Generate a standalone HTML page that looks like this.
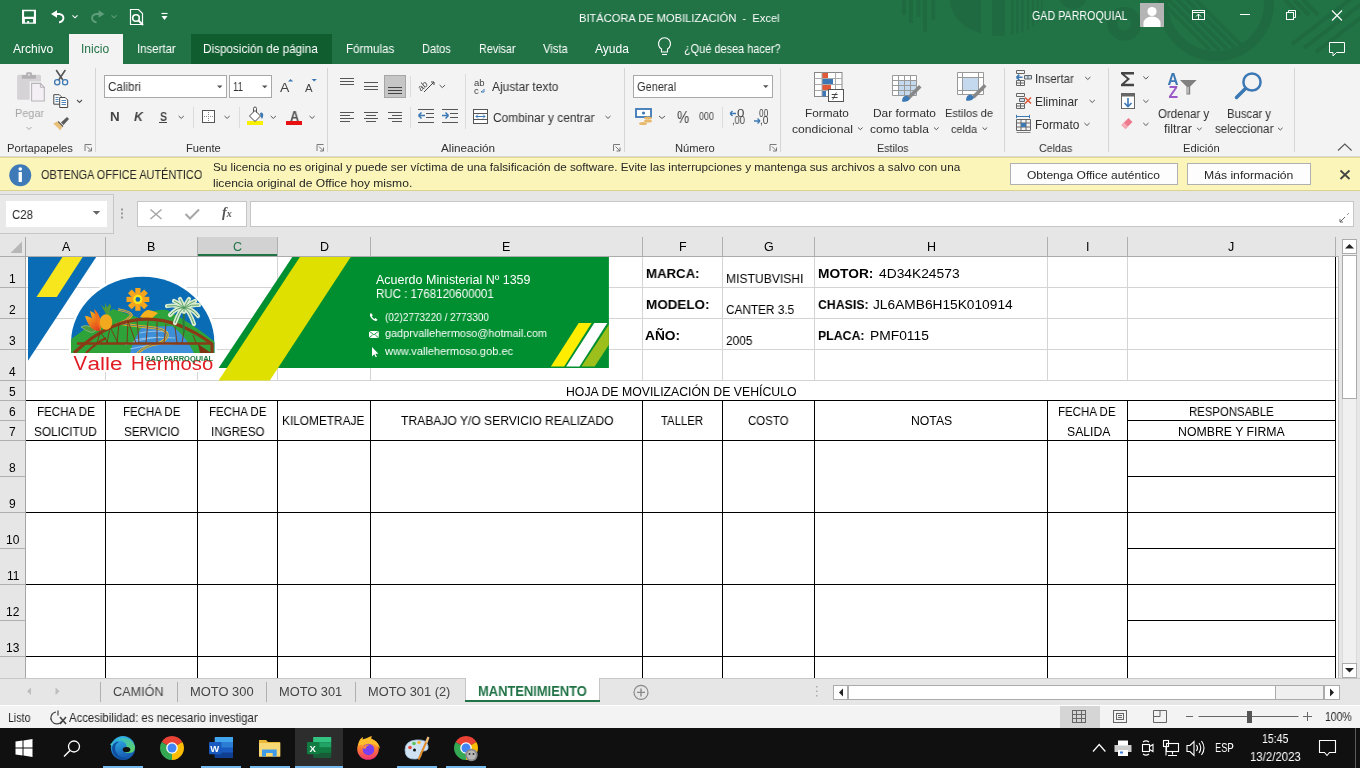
<!DOCTYPE html><html><head><meta charset="utf-8"><style>
*{margin:0;padding:0;box-sizing:border-box}
html,body{width:1360px;height:768px;overflow:hidden;background:#fff;font-family:"Liberation Sans",sans-serif}
.t{position:absolute;white-space:pre;line-height:1;will-change:transform}
svg{position:absolute;overflow:visible}
</style></head><body>
<div style="position:absolute;left:0px;top:0px;width:1360px;height:64px;background:#217346"></div>
<div style="position:absolute;left:0px;top:64px;width:1360px;height:93px;background:#f3f3f3"></div>
<div style="position:absolute;left:69px;top:34px;width:54px;height:30px;background:#f3f3f3"></div>
<div style="position:absolute;left:191px;top:34px;width:141px;height:30px;background:#105d30"></div>
<div style="position:absolute;left:0px;top:157px;width:1360px;height:34px;background:#fbf5b9;border-top:1px solid #e2d98e;border-bottom:1px solid #dcd38c"></div>
<div style="position:absolute;left:0px;top:156px;width:1360px;height:1px;background:#d6d6d6"></div>
<div style="position:absolute;left:0px;top:191px;width:1360px;height:46px;background:#e6e6e6"></div>
<div style="position:absolute;left:0px;top:237px;width:1360px;height:19px;background:#e6e6e6"></div>
<div style="position:absolute;left:26px;top:256px;width:1312px;height:422px;background:#fff"></div>
<div style="position:absolute;left:0px;top:256px;width:25px;height:422px;background:#e6e6e6"></div>
<div style="position:absolute;left:1338px;top:237px;width:22px;height:441px;background:#e6e6e6"></div>
<div style="position:absolute;left:0px;top:678px;width:1360px;height:27px;background:#e6e6e6"></div>
<div style="position:absolute;left:0px;top:706px;width:1360px;height:22px;background:#f3f3f3"></div>
<div style="position:absolute;left:0px;top:728px;width:1360px;height:40px;background:#101010"></div>
<svg width="1360" height="64" style="left:0;top:0"><g fill="#1f6a40"><rect x="902" y="0" width="3.8" height="15"/><rect x="909" y="0" width="3.8" height="23"/><rect x="916.5" y="0" width="3.8" height="17"/><rect x="923" y="0" width="3.8" height="31.5"/><rect x="931.4" y="0" width="3.8" height="20"/></g><clipPath id="semi"><path d="M950 0 A49.5 36 0 0 0 1049 0 Z"/></clipPath><g clip-path="url(#semi)" fill="#1f6a40"><rect x="950" y="0" width="31" height="40"/><rect x="992" y="0" width="13" height="40"/><rect x="1011" y="0" width="2.5" height="40"/><rect x="1016" y="0" width="2.5" height="40"/><rect x="1021" y="0" width="2.5" height="40"/><rect x="1027" y="0" width="2" height="40"/><rect x="1032" y="0" width="2" height="40"/><rect x="1037" y="0" width="1.5" height="40"/><rect x="1041" y="0" width="1.5" height="40"/></g><circle cx="1073" cy="-5" r="14" fill="#1f6a40"/><circle cx="1124.3" cy="23.7" r="12" fill="none" stroke="#1f6a40" stroke-width="10"/><circle cx="1216" cy="3" r="53" fill="none" stroke="#1f6a40" stroke-width="10"/><clipPath id="bigr"><circle cx="1216" cy="3" r="48"/></clipPath><g clip-path="url(#bigr)" stroke="#1f6a40" stroke-width="3.5"><line x1="1150" y1="-10" x2="1210" y2="50"/><line x1="1159" y1="-10" x2="1219" y2="50"/><line x1="1168" y1="-10" x2="1228" y2="50"/><line x1="1177" y1="-10" x2="1237" y2="50"/><line x1="1186" y1="-10" x2="1246" y2="50"/></g><g stroke="#1f6a40" stroke-width="4"><line x1="1285" y1="0" x2="1300" y2="15"/><line x1="1294" y1="0" x2="1309" y2="15"/><line x1="1303" y1="0" x2="1318" y2="15"/><line x1="1360" y1="-8" x2="1292" y2="44"/><line x1="1372" y1="-4" x2="1304" y2="48"/><line x1="1384" y1="0" x2="1316" y2="52"/></g></svg>
<div style="position:absolute;left:26px;top:287px;width:1312px;height:1px;background:#d4d4d4"></div>
<div style="position:absolute;left:26px;top:318px;width:1312px;height:1px;background:#d4d4d4"></div>
<div style="position:absolute;left:26px;top:349px;width:1312px;height:1px;background:#d4d4d4"></div>
<div style="position:absolute;left:26px;top:380px;width:1312px;height:1px;background:#d4d4d4"></div>
<div style="position:absolute;left:105px;top:256px;width:1px;height:124px;background:#d4d4d4"></div>
<div style="position:absolute;left:197px;top:256px;width:1px;height:124px;background:#d4d4d4"></div>
<div style="position:absolute;left:277px;top:256px;width:1px;height:124px;background:#d4d4d4"></div>
<div style="position:absolute;left:370px;top:256px;width:1px;height:124px;background:#d4d4d4"></div>
<div style="position:absolute;left:642px;top:256px;width:1px;height:124px;background:#d4d4d4"></div>
<div style="position:absolute;left:722px;top:256px;width:1px;height:124px;background:#d4d4d4"></div>
<div style="position:absolute;left:814px;top:256px;width:1px;height:124px;background:#d4d4d4"></div>
<div style="position:absolute;left:1047px;top:256px;width:1px;height:124px;background:#d4d4d4"></div>
<div style="position:absolute;left:1127px;top:256px;width:1px;height:124px;background:#d4d4d4"></div>
<div style="position:absolute;left:1335px;top:256px;width:1px;height:124px;background:#d4d4d4"></div>
<div style="position:absolute;left:1338px;top:256px;width:1px;height:422px;background:#b8b8b8"></div>
<div style="position:absolute;left:26px;top:400px;width:1310px;height:1px;background:#000"></div>
<div style="position:absolute;left:26px;top:440px;width:1310px;height:1px;background:#000"></div>
<div style="position:absolute;left:26px;top:512px;width:1310px;height:1px;background:#000"></div>
<div style="position:absolute;left:26px;top:584px;width:1310px;height:1px;background:#000"></div>
<div style="position:absolute;left:26px;top:656px;width:1310px;height:1px;background:#000"></div>
<div style="position:absolute;left:1127px;top:420px;width:209px;height:1px;background:#000"></div>
<div style="position:absolute;left:1127px;top:476px;width:209px;height:1px;background:#000"></div>
<div style="position:absolute;left:1127px;top:548px;width:209px;height:1px;background:#000"></div>
<div style="position:absolute;left:1127px;top:620px;width:209px;height:1px;background:#000"></div>
<div style="position:absolute;left:105px;top:400px;width:1px;height:278px;background:#000"></div>
<div style="position:absolute;left:197px;top:400px;width:1px;height:278px;background:#000"></div>
<div style="position:absolute;left:277px;top:400px;width:1px;height:278px;background:#000"></div>
<div style="position:absolute;left:370px;top:400px;width:1px;height:278px;background:#000"></div>
<div style="position:absolute;left:642px;top:400px;width:1px;height:278px;background:#000"></div>
<div style="position:absolute;left:722px;top:400px;width:1px;height:278px;background:#000"></div>
<div style="position:absolute;left:814px;top:400px;width:1px;height:278px;background:#000"></div>
<div style="position:absolute;left:1047px;top:400px;width:1px;height:278px;background:#000"></div>
<div style="position:absolute;left:1127px;top:400px;width:1px;height:278px;background:#000"></div>
<div style="position:absolute;left:1335px;top:400px;width:1px;height:278px;background:#000"></div>
<div style="position:absolute;left:1335px;top:256px;width:1px;height:422px;background:#000"></div>
<div style="position:absolute;left:197px;top:237px;width:80px;height:19px;background:#d2d2d2"></div>
<div style="position:absolute;left:197px;top:254px;width:80px;height:2px;background:#217346"></div>
<div style="position:absolute;left:0px;top:256px;width:1338px;height:1px;background:#ababab"></div>
<div style="position:absolute;left:105px;top:237px;width:1px;height:19px;background:#b0b0b0"></div>
<div style="position:absolute;left:197px;top:237px;width:1px;height:19px;background:#b0b0b0"></div>
<div style="position:absolute;left:277px;top:237px;width:1px;height:19px;background:#b0b0b0"></div>
<div style="position:absolute;left:370px;top:237px;width:1px;height:19px;background:#b0b0b0"></div>
<div style="position:absolute;left:642px;top:237px;width:1px;height:19px;background:#b0b0b0"></div>
<div style="position:absolute;left:722px;top:237px;width:1px;height:19px;background:#b0b0b0"></div>
<div style="position:absolute;left:814px;top:237px;width:1px;height:19px;background:#b0b0b0"></div>
<div style="position:absolute;left:1047px;top:237px;width:1px;height:19px;background:#b0b0b0"></div>
<div style="position:absolute;left:1127px;top:237px;width:1px;height:19px;background:#b0b0b0"></div>
<div style="position:absolute;left:1335px;top:237px;width:1px;height:19px;background:#b0b0b0"></div>
<div style="position:absolute;left:25px;top:237px;width:1px;height:441px;background:#a6a6a6"></div>
<div style="position:absolute;left:0px;top:287px;width:25px;height:1px;background:#b0b0b0"></div>
<div style="position:absolute;left:0px;top:318px;width:25px;height:1px;background:#b0b0b0"></div>
<div style="position:absolute;left:0px;top:349px;width:25px;height:1px;background:#b0b0b0"></div>
<div style="position:absolute;left:0px;top:380px;width:25px;height:1px;background:#b0b0b0"></div>
<div style="position:absolute;left:0px;top:400px;width:25px;height:1px;background:#b0b0b0"></div>
<div style="position:absolute;left:0px;top:420px;width:25px;height:1px;background:#b0b0b0"></div>
<div style="position:absolute;left:0px;top:440px;width:25px;height:1px;background:#b0b0b0"></div>
<div style="position:absolute;left:0px;top:476px;width:25px;height:1px;background:#b0b0b0"></div>
<div style="position:absolute;left:0px;top:512px;width:25px;height:1px;background:#b0b0b0"></div>
<div style="position:absolute;left:0px;top:548px;width:25px;height:1px;background:#b0b0b0"></div>
<div style="position:absolute;left:0px;top:584px;width:25px;height:1px;background:#b0b0b0"></div>
<div style="position:absolute;left:0px;top:620px;width:25px;height:1px;background:#b0b0b0"></div>
<div style="position:absolute;left:0px;top:656px;width:25px;height:1px;background:#b0b0b0"></div>
<div class="t" style="left:578.50px;top:13.00px;font-size:11.48px;color:#fff;transform:scaleX(0.9683);transform-origin:0 0;">BITÁCORA DE MOBILIZACIÓN  -  Excel</div>
<div class="t" style="left:1031.75px;top:10.00px;font-size:12.06px;color:#fff;transform:scaleX(0.8888);transform-origin:0 0;">GAD PARROQUIAL</div>
<div class="t" style="left:13.00px;top:43.00px;font-size:12.06px;color:#fff;transform:scaleX(1.0004);transform-origin:0 0;">Archivo</div>
<div class="t" style="left:81.25px;top:43.00px;font-size:12.06px;color:#217346;transform:scaleX(0.9940);transform-origin:0 0;">Inicio</div>
<div class="t" style="left:137.00px;top:43.00px;font-size:12.06px;color:#fff;transform:scaleX(0.9475);transform-origin:0 0;">Insertar</div>
<div class="t" style="left:203.25px;top:43.00px;font-size:12.06px;color:#fff;transform:scaleX(0.9737);transform-origin:0 0;">Disposición de página</div>
<div class="t" style="left:346.20px;top:43.00px;font-size:12.06px;color:#fff;transform:scaleX(0.9621);transform-origin:0 0;">Fórmulas</div>
<div class="t" style="left:422.30px;top:43.00px;font-size:12.06px;color:#fff;transform:scaleX(0.9115);transform-origin:0 0;">Datos</div>
<div class="t" style="left:479.30px;top:43.00px;font-size:12.06px;color:#fff;transform:scaleX(0.8949);transform-origin:0 0;">Revisar</div>
<div class="t" style="left:542.50px;top:43.00px;font-size:12.06px;color:#fff;transform:scaleX(0.9339);transform-origin:0 0;">Vista</div>
<div class="t" style="left:595.00px;top:43.00px;font-size:12.06px;color:#fff;transform:scaleX(0.9965);transform-origin:0 0;">Ayuda</div>
<div class="t" style="left:684.20px;top:43.00px;font-size:12.06px;color:#fff;transform:scaleX(0.9077);transform-origin:0 0;">¿Qué desea hacer?</div>
<div style="position:absolute;left:95px;top:68px;width:1px;height:84px;background:#d5d5d5"></div>
<div style="position:absolute;left:327px;top:68px;width:1px;height:84px;background:#d5d5d5"></div>
<div style="position:absolute;left:624px;top:68px;width:1px;height:84px;background:#d5d5d5"></div>
<div style="position:absolute;left:780px;top:68px;width:1px;height:84px;background:#d5d5d5"></div>
<div style="position:absolute;left:1004px;top:68px;width:1px;height:84px;background:#d5d5d5"></div>
<div style="position:absolute;left:1108px;top:68px;width:1px;height:84px;background:#d5d5d5"></div>
<div style="position:absolute;left:1294px;top:68px;width:1px;height:84px;background:#d5d5d5"></div>
<div style="position:absolute;left:193px;top:107px;width:1px;height:21px;background:#dcdcdc"></div>
<div style="position:absolute;left:239px;top:107px;width:1px;height:21px;background:#dcdcdc"></div>
<div style="position:absolute;left:410px;top:76px;width:1px;height:21px;background:#dcdcdc"></div>
<div style="position:absolute;left:410px;top:107px;width:1px;height:21px;background:#dcdcdc"></div>
<div style="position:absolute;left:465px;top:74px;width:1px;height:55px;background:#dcdcdc"></div>
<div style="position:absolute;left:722px;top:107px;width:1px;height:21px;background:#dcdcdc"></div>
<div class="t" style="left:6.70px;top:143.00px;font-size:11.19px;color:#303030;transform:scaleX(0.9928);transform-origin:0 0;">Portapapeles</div>
<div class="t" style="left:185.60px;top:143.00px;font-size:11.19px;color:#303030;transform:scaleX(0.9982);transform-origin:0 0;">Fuente</div>
<div class="t" style="left:440.70px;top:143.00px;font-size:11.19px;color:#303030;transform:scaleX(1.0474);transform-origin:0 0;">Alineación</div>
<div class="t" style="left:674.50px;top:143.00px;font-size:11.19px;color:#303030;transform:scaleX(0.9978);transform-origin:0 0;">Número</div>
<div class="t" style="left:876.70px;top:143.00px;font-size:11.19px;color:#303030;transform:scaleX(0.9557);transform-origin:0 0;">Estilos</div>
<div class="t" style="left:1039.30px;top:143.00px;font-size:11.19px;color:#303030;transform:scaleX(0.9552);transform-origin:0 0;">Celdas</div>
<div class="t" style="left:1182.50px;top:143.00px;font-size:11.19px;color:#303030;transform:scaleX(0.9997);transform-origin:0 0;">Edición</div>
<div class="t" style="left:14.70px;top:108.00px;font-size:11.48px;color:#a6a6a6;transform:scaleX(0.9492);transform-origin:0 0;">Pegar</div>
<div style="position:absolute;left:104px;top:75px;width:123px;height:23px;background:#fff;border:1px solid #a8a8a8"></div>
<div style="position:absolute;left:229px;top:75px;width:43px;height:23px;background:#fff;border:1px solid #a8a8a8"></div>
<div class="t" style="left:107.50px;top:82.00px;font-size:11.92px;color:#303030;transform:scaleX(0.9766);transform-origin:0 0;">Calibri</div>
<div class="t" style="left:232.80px;top:82.00px;font-size:11.92px;color:#303030;transform:scaleX(0.8068);transform-origin:0 0;">11</div>
<div class="t" style="left:280.40px;top:81.00px;font-size:13.66px;color:#444;transform:scaleX(1.0269);transform-origin:0 0;">A</div>
<div class="t" style="left:305.10px;top:84.00px;font-size:10.32px;color:#444;transform:scaleX(1.0992);transform-origin:0 0;">A</div>
<div class="t" style="left:110.00px;top:110.00px;font-size:13.37px;font-weight:bold;color:#444;transform:scaleX(0.9659);transform-origin:0 0;">N</div>
<div class="t" style="left:133.90px;top:110.00px;font-size:13.37px;font-weight:bold;color:#444;transform:scaleX(0.9244);transform-origin:0 0;font-style:italic;">K</div>
<div class="t" style="left:159.50px;top:110.00px;font-size:13.37px;font-weight:bold;color:#444;transform:scaleX(0.7984);transform-origin:0 0;">S</div>
<div style="position:absolute;left:159px;top:122px;width:8px;height:1px;background:#444"></div>
<div style="position:absolute;left:247px;top:121px;width:16px;height:4px;background:#f8f000"></div>
<div class="t" style="left:289.80px;top:110.00px;font-size:13.95px;font-weight:bold;color:#555;transform:scaleX(0.9058);transform-origin:0 0;">A</div>
<div style="position:absolute;left:286px;top:121px;width:16px;height:4px;background:#e81010"></div>
<div style="position:absolute;left:384px;top:75px;width:22px;height:23px;background:#c6c6c6;border:1px solid #a6a6a6"></div>
<div class="t" style="left:491.90px;top:81.00px;font-size:12.21px;color:#303030;transform:scaleX(0.9781);transform-origin:0 0;">Ajustar texto</div>
<div class="t" style="left:492.60px;top:112.00px;font-size:12.21px;color:#303030;transform:scaleX(0.9765);transform-origin:0 0;">Combinar y centrar</div>
<div style="position:absolute;left:633px;top:75px;width:140px;height:23px;background:#fff;border:1px solid #a8a8a8"></div>
<div class="t" style="left:636.50px;top:81.00px;font-size:12.50px;color:#303030;transform:scaleX(0.8787);transform-origin:0 0;">General</div>
<div class="t" style="left:677.20px;top:110.00px;font-size:15.99px;color:#444;transform:scaleX(0.8644);transform-origin:0 0;">%</div>
<div class="t" style="left:699.40px;top:112.00px;font-size:10.47px;color:#444;transform:scaleX(0.8468);transform-origin:0 0;">000</div>
<div class="t" style="left:737.00px;top:109.00px;font-size:10.17px;color:#444;transform:scaleX(1.3105);transform-origin:0 0;">0</div>
<div class="t" style="left:731.50px;top:116.00px;font-size:10.17px;color:#444;transform:scaleX(0.9121);transform-origin:0 0;">,00</div>
<div class="t" style="left:759.00px;top:109.00px;font-size:10.17px;color:#444;transform:scaleX(0.8146);transform-origin:0 0;">00</div>
<div class="t" style="left:760.00px;top:116.00px;font-size:10.17px;color:#444;transform:scaleX(0.9652);transform-origin:0 0;">,0</div>
<div class="t" style="left:805.40px;top:107.00px;font-size:11.63px;color:#303030;transform:scaleX(1.0135);transform-origin:0 0;">Formato</div>
<div class="t" style="left:791.80px;top:123.00px;font-size:11.63px;color:#303030;transform:scaleX(1.0464);transform-origin:0 0;">condicional</div>
<div class="t" style="left:873.40px;top:107.00px;font-size:11.63px;color:#303030;transform:scaleX(1.0261);transform-origin:0 0;">Dar formato</div>
<div class="t" style="left:869.60px;top:123.00px;font-size:11.63px;color:#303030;transform:scaleX(1.0348);transform-origin:0 0;">como tabla</div>
<div class="t" style="left:945.40px;top:107.00px;font-size:11.63px;color:#303030;transform:scaleX(0.9522);transform-origin:0 0;">Estilos de</div>
<div class="t" style="left:950.80px;top:123.00px;font-size:11.63px;color:#303030;transform:scaleX(0.9408);transform-origin:0 0;">celda</div>
<div class="t" style="left:1035.40px;top:74.00px;font-size:11.92px;color:#303030;transform:scaleX(0.9603);transform-origin:0 0;">Insertar</div>
<div class="t" style="left:1035.40px;top:97.00px;font-size:11.92px;color:#303030;transform:scaleX(0.9924);transform-origin:0 0;">Eliminar</div>
<div class="t" style="left:1035.40px;top:120.00px;font-size:11.92px;color:#303030;transform:scaleX(0.9911);transform-origin:0 0;">Formato</div>
<div class="t" style="left:1157.90px;top:108.00px;font-size:12.21px;color:#303030;transform:scaleX(0.9416);transform-origin:0 0;">Ordenar y</div>
<div class="t" style="left:1164.20px;top:123.00px;font-size:12.21px;color:#303030;transform:scaleX(1.0257);transform-origin:0 0;">filtrar</div>
<div class="t" style="left:1227.00px;top:108.00px;font-size:12.21px;color:#303030;transform:scaleX(0.9264);transform-origin:0 0;">Buscar y</div>
<div class="t" style="left:1214.70px;top:123.00px;font-size:12.21px;color:#303030;transform:scaleX(0.9453);transform-origin:0 0;">seleccionar</div>
<div class="t" style="left:40.50px;top:170.00px;font-size:11.92px;color:#262626;transform:scaleX(0.9168);transform-origin:0 0;">OBTENGA OFFICE AUTÉNTICO</div>
<div class="t" style="left:213.20px;top:161.00px;font-size:11.63px;color:#262626;transform:scaleX(1.0081);transform-origin:0 0;">Su licencia no es original y puede ser víctima de una falsificación de software. Evite las interrupciones y mantenga sus archivos a salvo con una</div>
<div class="t" style="left:213.20px;top:177.00px;font-size:11.63px;color:#262626;transform:scaleX(1.0394);transform-origin:0 0;">licencia original de Office hoy mismo.</div>
<div style="position:absolute;left:1010px;top:163px;width:168px;height:22px;background:#fdfdfd;border:1px solid #b0b0b0"></div>
<div style="position:absolute;left:1187px;top:163px;width:124px;height:22px;background:#fdfdfd;border:1px solid #b0b0b0"></div>
<div class="t" style="left:1026.50px;top:169.00px;font-size:11.63px;color:#262626;transform:scaleX(1.0356);transform-origin:0 0;">Obtenga Office auténtico</div>
<div class="t" style="left:1203.50px;top:169.00px;font-size:11.63px;color:#262626;transform:scaleX(1.0482);transform-origin:0 0;">Más información</div>
<div style="position:absolute;left:-1px;top:194px;width:115px;height:40px;border:1px solid #c6c6c6;background:#e9e9e9"></div>
<div style="position:absolute;left:6px;top:201px;width:101px;height:26px;background:#fff"></div>
<div class="t" style="left:12.40px;top:209.00px;font-size:12.50px;color:#262626;transform:scaleX(0.9155);transform-origin:0 0;">C28</div>
<div style="position:absolute;left:137px;top:201px;width:110px;height:26px;background:#fff;border:1px solid #c6c6c6"></div>
<div class="t" style="left:222px;top:205.5px;font-family:'Liberation Serif',serif;font-style:italic;font-weight:bold;font-size:14px;color:#555">f<span style="font-size:10px">x</span></div>
<div style="position:absolute;left:250px;top:201px;width:1104px;height:26px;background:#fff;border:1px solid #c6c6c6"></div>
<div style="position:absolute;left:1342px;top:239px;width:15px;height:15px;background:#fff;border:1px solid #ababab"></div>
<div style="position:absolute;left:1342px;top:254px;width:15px;height:410px;background:#f0f0f0;border-left:1px solid #dadada;border-right:1px solid #dadada"></div>
<div style="position:absolute;left:1342px;top:255px;width:15px;height:144px;background:#fff;border:1px solid #ababab"></div>
<div style="position:absolute;left:1342px;top:663px;width:15px;height:15px;background:#fff;border:1px solid #ababab"></div>
<div style="position:absolute;left:0px;top:678px;width:1360px;height:1px;background:#c6c6c6"></div>
<div style="position:absolute;left:100px;top:682px;width:1px;height:20px;background:#b0b0b0"></div>
<div style="position:absolute;left:177px;top:682px;width:1px;height:20px;background:#b0b0b0"></div>
<div style="position:absolute;left:266px;top:682px;width:1px;height:20px;background:#b0b0b0"></div>
<div style="position:absolute;left:355px;top:682px;width:1px;height:20px;background:#b0b0b0"></div>
<div class="t" style="left:113.25px;top:686.00px;font-size:12.79px;color:#444;transform:scaleX(0.9870);transform-origin:0 0;">CAMIÓN</div>
<div class="t" style="left:189.50px;top:686.00px;font-size:12.79px;color:#444;transform:scaleX(1.0110);transform-origin:0 0;">MOTO 300</div>
<div class="t" style="left:278.50px;top:686.00px;font-size:12.79px;color:#444;transform:scaleX(1.0038);transform-origin:0 0;">MOTO 301</div>
<div class="t" style="left:368.10px;top:686.00px;font-size:12.79px;color:#444;transform:scaleX(1.0019);transform-origin:0 0;">MOTO 301 (2)</div>
<div style="position:absolute;left:465px;top:678px;width:135px;height:24px;background:#fff;border-left:1px solid #c6c6c6;border-right:1px solid #c6c6c6"></div>
<div style="position:absolute;left:465px;top:700px;width:135px;height:2px;background:#217346"></div>
<div class="t" style="left:477.70px;top:685.00px;font-size:13.95px;font-weight:bold;color:#217346;transform:scaleX(0.9272);transform-origin:0 0;">MANTENIMIENTO</div>
<div style="position:absolute;left:833px;top:685px;width:491px;height:15px;background:#f0f0f0;border:1px solid #ababab"></div>
<div style="position:absolute;left:833px;top:685px;width:15px;height:15px;background:#fff;border:1px solid #ababab"></div>
<div style="position:absolute;left:848px;top:685px;width:428px;height:15px;background:#fff;border:1px solid #ababab"></div>
<div style="position:absolute;left:1324px;top:685px;width:16px;height:15px;background:#fff;border:1px solid #ababab"></div>
<div class="t" style="left:7.50px;top:713.00px;font-size:11.92px;color:#262626;transform:scaleX(0.8947);transform-origin:0 0;">Listo</div>
<div class="t" style="left:68.75px;top:713.00px;font-size:11.92px;color:#262626;transform:scaleX(0.9529);transform-origin:0 0;">Accesibilidad: es necesario investigar</div>
<div style="position:absolute;left:1060px;top:706px;width:40px;height:22px;background:#d5d5d5"></div>
<div class="t" style="left:1325.00px;top:712.00px;font-size:11.92px;color:#262626;transform:scaleX(0.8784);transform-origin:0 0;">100%</div>
<div style="position:absolute;left:103px;top:766px;width:40px;height:2px;background:#76b9ed"></div>
<div style="position:absolute;left:201px;top:766px;width:40px;height:2px;background:#76b9ed"></div>
<div style="position:absolute;left:250px;top:766px;width:40px;height:2px;background:#76b9ed"></div>
<div style="position:absolute;left:295px;top:728px;width:48px;height:40px;background:#2d2d2d"></div>
<div style="position:absolute;left:295px;top:766px;width:48px;height:2px;background:#76b9ed"></div>
<div style="position:absolute;left:397px;top:766px;width:40px;height:2px;background:#76b9ed"></div>
<div style="position:absolute;left:446px;top:766px;width:40px;height:2px;background:#76b9ed"></div>
<div class="t" style="left:1214.90px;top:743.00px;font-size:11.92px;color:#fff;transform:scaleX(0.7761);transform-origin:0 0;">ESP</div>
<div class="t" style="left:1261.60px;top:733.00px;font-size:12.21px;color:#fff;transform:scaleX(0.8632);transform-origin:0 0;">15:45</div>
<div class="t" style="left:1249.90px;top:751.00px;font-size:12.79px;color:#fff;transform:scaleX(0.8925);transform-origin:0 0;">13/2/2023</div>
<div style="position:absolute;left:1355px;top:728px;width:1px;height:40px;background:#5a5a5a"></div>
<svg width="1360" height="768" style="left:0;top:0"><path d="M28 257 H96.2 L28 360.8 Z" fill="#0b6cb6"/><path d="M62.4 257 H82.7 L56.8 297 H36.5 Z" fill="#f7e51e"/><path d="M69 353 V343 A74 69 0 0 1 217 343 V372 H69 Z" fill="#fff"/><clipPath id="em"><path d="M71 353 V343 A71.7 66.3 0 0 1 214.4 343 V353 Z"/></clipPath><path d="M71 353 V343 A71.7 66.3 0 0 1 214.4 343 V353 Z" fill="#0b6cb6"/><g clip-path="url(#em)"><path d="M60 353 L60 348 Q85 328 113 309 Q128 314 142 319 L150 312 Q160 309 167 310 Q195 325 220 346 L220 353 Z" fill="#2ea33a"/><path d="M140 317 Q145 309 149 310 Q154 311 158 313 L150 320 Z" fill="#f5b21c"/><path d="M130 353 Q134 338 142 327 L172 326 Q186 336 194 353 Z" fill="#3d8fd8"/><path d="M125 345 q15 -6 35 -8 M130 349 q20 -5 45 -5 M140 333 q12 -3 28 -1 M135 340 q15 -4 40 -2" fill="none" stroke="#a7d0f0" stroke-width="0.8"/><path d="M118 309.5 q12 2 13.5 5.5 q-3 5 -12 8.5 q20 3 32 4 q16 2 16 8 q-2 6 -10 8 q-14 3 -20 10" fill="none" stroke="#f5b21c" stroke-width="2.6"/><path d="M118 309.5 q12 2 13.5 5.5 q-3 5 -12 8.5 q20 3 32 4 q16 2 16 8 q-2 6 -10 8 q-14 3 -20 10" fill="none" stroke="#0b6cb6" stroke-width="0.7"/><path d="M74 353 Q140 290 212 344 L212 353" fill="none" stroke="#8a3a17" stroke-width="3.2"/><path d="M77 343.5 H211" stroke="#8a3a17" stroke-width="2.4"/><path d="M86 353 Q96 343 106 338" fill="none" stroke="#8a3a17" stroke-width="2.2"/><path d="M198 344 L211 353 H200 Z" fill="#7a3213"/><g stroke="#7a3213" stroke-width="0.9"><line x1="100" y1="333" x2="97" y2="343"/><line x1="101" y1="333" x2="108" y2="343"/><line x1="110" y1="327" x2="107" y2="343"/><line x1="110" y1="327" x2="118" y2="343"/><line x1="119" y1="323" x2="117" y2="343"/><line x1="128" y1="321" x2="127" y2="343"/><line x1="128" y1="321" x2="136" y2="343"/><line x1="137" y1="320" x2="139" y2="343"/><line x1="148" y1="321" x2="146" y2="343"/><line x1="157" y1="322" x2="157" y2="343"/><line x1="166" y1="324" x2="164" y2="343"/><line x1="175" y1="327" x2="177" y2="343"/><line x1="184" y1="331" x2="182" y2="343"/><line x1="193" y1="335" x2="196" y2="343"/></g><defs><linearGradient id="flw" x1="0" y1="0" x2="1" y2="1"><stop offset="0" stop-color="#f8b51c"/><stop offset="1" stop-color="#e0301c"/></linearGradient></defs><path d="M81 327 q6 -4 15 3 q-3 6 -15 -3z" fill="#4f9a3a" stroke="#dfe8d0" stroke-width="0.4"/><path d="M85 316 q5 0 9 4 q4 6 6 11 q-10 1 -15 -15z" fill="url(#flw)"/><path d="M90 311 q6 2 8 8 q2 6 3 12 q-8 -6 -11 -20z" fill="url(#flw)"/><path d="M94 309 q4 3 6 9 q1 6 1 13 q-4 -6 -7 -22z" fill="#f0701c"/><ellipse cx="106" cy="322" rx="6.3" ry="7.8" fill="#f2a91e"/><path d="M106 314 l-5 -9 l4 3 l0 -5.5 l2 5 l3 -4 l1 3 l-2 7.5z" fill="#4f9a3a"/><path d="M184 333 q-1 -10 0 -22" stroke="#2f7a3a" stroke-width="2" fill="none"/><g fill="none" stroke="#d9ecd2" stroke-width="4.2" stroke-linecap="round"><path d="M184 308 q-8.5 -3.6 -17 -2"/><path d="M184 308 q-7.0 -0.8999999999999999 -14 7"/><path d="M184 308 q-4.5 1.5 -9 15"/><path d="M184 308 q7.5 -3.9 15 -3"/><path d="M184 308 q7.0 -0.6000000000000001 14 8"/><path d="M184 308 q5.0 1.7999999999999998 10 16"/><path d="M184 308 q-2.0 -5.699999999999999 -4 -9"/><path d="M184 308 q2.5 -5.699999999999999 5 -9"/><path d="M184 308 q-5.0 -5.1 -10 -7"/><path d="M184 308 q5.5 -5.1 11 -7"/><path d="M184 308 q0.0 -1.8 0 4"/></g><g fill="none" stroke="#4f9a5a" stroke-width="0.9"><path d="M184 308 q-8.5 -3.6 -17 -2"/><path d="M184 308 q-7.0 -0.8999999999999999 -14 7"/><path d="M184 308 q-4.5 1.5 -9 15"/><path d="M184 308 q7.5 -3.9 15 -3"/><path d="M184 308 q7.0 -0.6000000000000001 14 8"/><path d="M184 308 q5.0 1.7999999999999998 10 16"/><path d="M184 308 q-2.0 -5.699999999999999 -4 -9"/><path d="M184 308 q2.5 -5.699999999999999 5 -9"/><path d="M184 308 q-5.0 -5.1 -10 -7"/><path d="M184 308 q5.5 -5.1 11 -7"/><path d="M184 308 q0.0 -1.8 0 4"/></g></g><g transform="translate(137.9 299.4)" fill="#f7a51c"><rect x="-2.6" y="-11.4" width="5.2" height="6" transform="rotate(0)"/><rect x="-2.6" y="-11.4" width="5.2" height="6" transform="rotate(45)"/><rect x="-2.6" y="-11.4" width="5.2" height="6" transform="rotate(90)"/><rect x="-2.6" y="-11.4" width="5.2" height="6" transform="rotate(135)"/><rect x="-2.6" y="-11.4" width="5.2" height="6" transform="rotate(180)"/><rect x="-2.6" y="-11.4" width="5.2" height="6" transform="rotate(225)"/><rect x="-2.6" y="-11.4" width="5.2" height="6" transform="rotate(270)"/><rect x="-2.6" y="-11.4" width="5.2" height="6" transform="rotate(315)"/><circle r="6.5"/></g><circle cx="137.9" cy="299.4" r="4.6" fill="#f8e81c"/><circle cx="137.9" cy="299.4" r="2.4" fill="#0b6cb6"/><text y="369.8" font-family="Liberation Sans" fill="#e01b22"><tspan x="73.5" font-size="20.3" textLength="13.5" lengthAdjust="spacingAndGlyphs">V</tspan><tspan x="87.5" font-size="18" textLength="35" lengthAdjust="spacingAndGlyphs">alle</tspan><tspan x="131" font-size="20.3" textLength="13.7" lengthAdjust="spacingAndGlyphs">H</tspan><tspan x="145.5" font-size="18" textLength="67.7" lengthAdjust="spacingAndGlyphs">ermoso</tspan></text><text x="144.7" y="360.8" font-family="Liberation Sans" font-weight="bold" font-size="7.4" fill="#1e7a40" textLength="68.5" lengthAdjust="spacingAndGlyphs">GAD PARROQUIAL</text><path d="M292.3 257 H608.9 V368 H218.6 Z" fill="#008f30"/><path d="M299.9 257 H350.7 L269.8 380.6 H218.6 Z" fill="#dfdf00"/><path d="M578.7 323 H591.6 L564.2 366.6 H550.9 Z" fill="#ffed00"/><path d="M594.3 323 H607.3 L579.5 366.6 H566.2 Z" fill="#fff"/><path d="M608.9 324.8 V344.7 L594.7 366.6 H581.4 Z" fill="#9cbf1b"/><path d="M371 313 q-1.5 1 -1 3 q2 4 5.5 5 q1.5 0 2 -1.3 l-2 -1.6 l-1.2 1 q-1.8 -1 -2.5 -2.8 l1 -1 z" fill="#fff"/><rect x="369" y="331" width="9.8" height="7" fill="#fff"/><path d="M369 331 l4.9 3.8 l4.9 -3.8 M369 338 l3.5 -3 M378.8 338 l-3.5 -3" fill="none" stroke="#008f30" stroke-width="0.9"/><path d="M372 347 v9.5 l2.2 -2.2 l1.5 3 l1.2 -0.6 l-1.5 -3 h3 z" fill="#fff"/></svg>
<div class="t" style="left:376.40px;top:274.00px;font-size:12.06px;color:#fff;transform:scaleX(1.0366);transform-origin:0 0;">Acuerdo Ministerial Nº 1359</div>
<div class="t" style="left:376.40px;top:288.00px;font-size:12.06px;color:#fff;transform:scaleX(0.9553);transform-origin:0 0;">RUC : 1768120600001</div>
<div class="t" style="left:384.90px;top:312.00px;font-size:11.34px;color:#fff;transform:scaleX(0.8821);transform-origin:0 0;">(02)2773220 / 2773300</div>
<div class="t" style="left:384.90px;top:328.00px;font-size:11.34px;color:#fff;transform:scaleX(0.9590);transform-origin:0 0;">gadprvallehermoso@hotmail.com</div>
<div class="t" style="left:384.96px;top:346.00px;font-size:11.34px;color:#fff;transform:scaleX(0.9724);transform-origin:0 0;">www.vallehermoso.gob.ec</div>
<div class="t" style="left:61.81px;top:241.00px;font-size:12.50px;color:#000;">A</div>
<div class="t" style="left:147.34px;top:241.00px;font-size:12.50px;color:#000;">B</div>
<div class="t" style="left:233.00px;top:241.00px;font-size:12.50px;color:#217346;">C</div>
<div class="t" style="left:319.50px;top:241.00px;font-size:12.50px;color:#000;">D</div>
<div class="t" style="left:502.34px;top:241.00px;font-size:12.50px;color:#000;">E</div>
<div class="t" style="left:678.69px;top:241.00px;font-size:12.50px;color:#000;">F</div>
<div class="t" style="left:763.62px;top:241.00px;font-size:12.50px;color:#000;">G</div>
<div class="t" style="left:926.50px;top:241.00px;font-size:12.50px;color:#000;">H</div>
<div class="t" style="left:1085.75px;top:241.00px;font-size:12.50px;color:#000;">I</div>
<div class="t" style="left:1228.38px;top:241.00px;font-size:12.50px;color:#000;">J</div>
<div class="t" style="left:9.47px;top:273.00px;font-size:12.00px;color:#000;">1</div>
<div class="t" style="left:9.47px;top:304.00px;font-size:12.00px;color:#000;">2</div>
<div class="t" style="left:9.47px;top:335.00px;font-size:12.00px;color:#000;">3</div>
<div class="t" style="left:9.47px;top:366.00px;font-size:12.00px;color:#000;">4</div>
<div class="t" style="left:9.47px;top:386.00px;font-size:12.00px;color:#000;">5</div>
<div class="t" style="left:9.47px;top:406.00px;font-size:12.00px;color:#000;">6</div>
<div class="t" style="left:9.47px;top:426.00px;font-size:12.00px;color:#000;">7</div>
<div class="t" style="left:9.47px;top:462.00px;font-size:12.00px;color:#000;">8</div>
<div class="t" style="left:9.47px;top:498.00px;font-size:12.00px;color:#000;">9</div>
<div class="t" style="left:6.14px;top:534.00px;font-size:12.00px;color:#000;">10</div>
<div class="t" style="left:6.56px;top:570.00px;font-size:12.00px;color:#000;">11</div>
<div class="t" style="left:6.14px;top:606.00px;font-size:12.00px;color:#000;">12</div>
<div class="t" style="left:6.14px;top:642.00px;font-size:12.00px;color:#000;">13</div>
<div class="t" style="left:36.50px;top:406.00px;font-size:12.21px;color:#000;transform:scaleX(0.9468);transform-origin:0 0;">FECHA DE</div>
<div class="t" style="left:33.60px;top:426.00px;font-size:12.21px;color:#000;transform:scaleX(0.9641);transform-origin:0 0;">SOLICITUD</div>
<div class="t" style="left:122.60px;top:406.00px;font-size:12.21px;color:#000;transform:scaleX(0.9386);transform-origin:0 0;">FECHA DE</div>
<div class="t" style="left:123.50px;top:426.00px;font-size:12.21px;color:#000;transform:scaleX(0.9550);transform-origin:0 0;">SERVICIO</div>
<div class="t" style="left:208.60px;top:406.00px;font-size:12.21px;color:#000;transform:scaleX(0.9403);transform-origin:0 0;">FECHA DE</div>
<div class="t" style="left:210.50px;top:426.00px;font-size:12.21px;color:#000;transform:scaleX(0.9505);transform-origin:0 0;">INGRESO</div>
<div class="t" style="left:282.00px;top:415.00px;font-size:12.21px;color:#000;transform:scaleX(0.9718);transform-origin:0 0;">KILOMETRAJE</div>
<div class="t" style="left:400.60px;top:415.00px;font-size:12.21px;color:#000;transform:scaleX(0.9910);transform-origin:0 0;">TRABAJO Y/O SERVICIO REALIZADO</div>
<div class="t" style="left:661.00px;top:415.00px;font-size:12.21px;color:#000;transform:scaleX(0.9285);transform-origin:0 0;">TALLER</div>
<div class="t" style="left:748.40px;top:415.00px;font-size:12.21px;color:#000;transform:scaleX(0.9370);transform-origin:0 0;">COSTO</div>
<div class="t" style="left:911.20px;top:415.00px;font-size:12.21px;color:#000;transform:scaleX(1.0038);transform-origin:0 0;">NOTAS</div>
<div class="t" style="left:1058.40px;top:406.00px;font-size:12.21px;color:#000;transform:scaleX(0.9419);transform-origin:0 0;">FECHA DE</div>
<div class="t" style="left:1066.50px;top:426.00px;font-size:12.21px;color:#000;transform:scaleX(1.0008);transform-origin:0 0;">SALIDA</div>
<div class="t" style="left:1189.00px;top:406.00px;font-size:12.21px;color:#000;transform:scaleX(0.9312);transform-origin:0 0;">RESPONSABLE</div>
<div class="t" style="left:1177.70px;top:426.00px;font-size:12.21px;color:#000;transform:scaleX(1.0076);transform-origin:0 0;">NOMBRE Y FIRMA</div>
<div class="t" style="left:565.50px;top:386.00px;font-size:12.21px;color:#000;transform:scaleX(1.0061);transform-origin:0 0;">HOJA DE MOVILIZACIÓN DE VEHÍCULO</div>
<div class="t" style="left:646.00px;top:267.00px;font-size:13.66px;font-weight:bold;color:#000;transform:scaleX(0.9675);transform-origin:0 0;">MARCA:</div>
<div class="t" style="left:646.00px;top:298.00px;font-size:13.66px;font-weight:bold;color:#000;transform:scaleX(0.9847);transform-origin:0 0;">MODELO:</div>
<div class="t" style="left:645.30px;top:329.00px;font-size:13.66px;font-weight:bold;color:#000;transform:scaleX(1.0055);transform-origin:0 0;">AÑO:</div>
<div class="t" style="left:817.60px;top:267.00px;font-size:13.66px;font-weight:bold;color:#000;transform:scaleX(1.0049);transform-origin:0 0;">MOTOR:</div>
<div class="t" style="left:817.60px;top:298.00px;font-size:13.66px;font-weight:bold;color:#000;transform:scaleX(0.9011);transform-origin:0 0;">CHASIS:</div>
<div class="t" style="left:817.60px;top:329.00px;font-size:13.66px;font-weight:bold;color:#000;transform:scaleX(0.9023);transform-origin:0 0;">PLACA:</div>
<div class="t" style="left:726.00px;top:272.00px;font-size:13.08px;color:#000;transform:scaleX(0.9259);transform-origin:0 0;">MISTUBVISHI</div>
<div class="t" style="left:726.00px;top:303.00px;font-size:13.08px;color:#000;transform:scaleX(0.9020);transform-origin:0 0;">CANTER 3.5</div>
<div class="t" style="left:726.00px;top:334.00px;font-size:13.08px;color:#000;transform:scaleX(0.9105);transform-origin:0 0;">2005</div>
<div class="t" style="left:878.70px;top:267.00px;font-size:13.08px;color:#000;transform:scaleX(1.0550);transform-origin:0 0;">4D34K24573</div>
<div class="t" style="left:873.00px;top:298.00px;font-size:13.08px;color:#000;transform:scaleX(1.0496);transform-origin:0 0;">JL6AMB6H15K010914</div>
<div class="t" style="left:869.80px;top:329.00px;font-size:13.08px;color:#000;transform:scaleX(1.0551);transform-origin:0 0;">PMF0115</div>
<svg width="1360" height="768" style="left:0;top:0"><path fill="#fff" fill-rule="evenodd" d="M22 9.8 H36 V23.8 H22 Z M24.1 11.2 V16.7 H33.9 V11.2 Z M24.9 18.9 V22.5 H27.2 V21 H29.1 V22.5 H33.1 V18.9 Z"/><path d="M51 13.9 L57 10.2 V17.8 Z" fill="#fff"/><path d="M56 14 H59.5 A5 4.2 0 0 1 59.5 22.2 H59" fill="none" stroke="#fff" stroke-width="1.9"/><path d="M104.5 13.9 L98.5 10.2 V17.8 Z" fill="#5f9d7b"/><path d="M99.5 14 H96 A5 4.2 0 0 0 96 22.2 H96.5" fill="none" stroke="#5f9d7b" stroke-width="1.9"/><path d="M72.5 15.3 l2.5 2.5 l2.5 -2.5" fill="none" stroke="#fff" stroke-width="1.1"/><path d="M111.5 15.3 l2.5 2.5 l2.5 -2.5" fill="none" stroke="#5f9d7b" stroke-width="1.1"/><g fill="none" stroke="#fff" stroke-width="1.2"><path d="M130.5 9.5 h8 l4 4 v11 h-12 z"/><circle cx="136" cy="18" r="3.3" stroke-width="1.6"/><path d="M138.5 20.5 l4.5 4.5" stroke-width="2"/></g><path d="M161.5 13.5 h6" stroke="#fff" stroke-width="1.2"/><path d="M161.5 16 h6 l-3 4 z" fill="#fff"/><rect x="1140" y="3" width="24" height="24" fill="#b4b4b4"/><circle cx="1152" cy="11.5" r="4.6" fill="#fff"/><path d="M1143.5 27 v-4 a8.5 6.5 0 0 1 17 0 v4 z" fill="#fff"/><g fill="none" stroke="#fff" stroke-width="1"><rect x="1192.5" y="10.5" width="12" height="9"/><path d="M1192.5 12.5 h12"/><path d="M1198.5 19 v-5 M1196 16.5 l2.5 -2.5 l2.5 2.5"/><path d="M1240 14.5 h10"/><rect x="1286.5" y="12.5" width="7" height="7"/><path d="M1288.5 12.5 v-2 h7 v7 h-2"/><path d="M1332 10.5 l10 10 M1342 10.5 l-10 10" stroke-width="1.1"/></g><path d="M1329.5 42.5 h15 v10 h-8 l-3.5 3.5 v-3.5 h-3.5 z" fill="none" stroke="#fff" stroke-width="1"/><g fill="none" stroke="#fff" stroke-width="1.1"><path d="M661.5 52 v-3 a6 6 0 1 1 6 0 v3 z"/><path d="M662 54.5 h5"/></g><g fill="none" stroke="#7a7a7a" stroke-width="1"><path d="M85.0 151 v-6.5 h6.5"/><path d="M87.0 146.5 l4.5 4.5 M91.5 147.5 v3.5 h-3.5"/></g><g fill="none" stroke="#7a7a7a" stroke-width="1"><path d="M317.0 151 v-6.5 h6.5"/><path d="M319.0 146.5 l4.5 4.5 M323.5 147.5 v3.5 h-3.5"/></g><g fill="none" stroke="#7a7a7a" stroke-width="1"><path d="M613.5 151 v-6.5 h6.5"/><path d="M615.5 146.5 l4.5 4.5 M620 147.5 v3.5 h-3.5"/></g><g fill="none" stroke="#7a7a7a" stroke-width="1"><path d="M770.0 151 v-6.5 h6.5"/><path d="M772.0 146.5 l4.5 4.5 M776.5 147.5 v3.5 h-3.5"/></g><path d="M1338 150.5 l6.8 -6.5 l6.8 6.5" fill="none" stroke="#555" stroke-width="1.1"/><rect x="17.1" y="74.7" width="23.9" height="25" rx="1.5" fill="#d5d3d5"/><rect x="21.8" y="75.1" width="14.2" height="3.7" rx="0.8" fill="#b3b1b3"/><rect x="26.2" y="72.2" width="5.7" height="3.5" rx="1" fill="#b3b1b3"/><circle cx="29" cy="74.8" r="0.9" fill="#f3f3f3"/><path d="M31.1 82.9 h9.5 l4.2 4.2 v14.4 h-13.7 z" fill="#f4eff4" stroke="#f3f3f3" stroke-width="3"/><path d="M31.6 83.4 h8.8 l3.9 3.9 v13.7 h-12.7 z" fill="#f4eff4" stroke="#b8b4b8" stroke-width="1.1"/><path d="M40.4 83.4 v3.9 h3.9" fill="none" stroke="#b8b4b8" stroke-width="1"/><path d="M26.5 127 l2.5 2.5 l2.5 -2.5" fill="none" stroke="#a6a6a6" stroke-width="1"/><path d="M56.5 70.5 L62.5 79.5 M65 70.5 L59 79.5" stroke="#555" stroke-width="1.6" stroke-linecap="round"/><circle cx="57.2" cy="82.2" r="2.6" fill="none" stroke="#3c78b4" stroke-width="1.3"/><circle cx="65.1" cy="82.2" r="2.6" fill="none" stroke="#3c78b4" stroke-width="1.3"/><path d="M53.8 94.7 h5.5 l2 2 v7.5 h-7.5 z" fill="#fff" stroke="#444" stroke-width="1"/><path d="M59.7 97.5 h5.5 l2.5 2.5 v7.5 h-8 z" fill="#fff" stroke="#444" stroke-width="1"/><path d="M55.5 97.5h3M55.5 99.5h3M55.5 101.5h3M61.5 100.5h4.5M61.5 102.5h4.5M61.5 104.5h4.5" stroke="#3c78b4" stroke-width="0.9"/><path d="M77 100 l2.5 2.5 l2.5 -2.5" fill="none" stroke="#555" stroke-width="1.1"/><path d="M61 122.5 l6 -5.5 l2 2 l-5.5 6 z" fill="#5a5a5a"/><path d="M58.5 121 l5 5 l-1.5 1.5 l-5 -5z" fill="#5a5a5a"/><path d="M53.3 123.4 l4 -1.8 l5 5 l-1.8 4 z" fill="#e8bf78"/><path d="M217 85.5 h5.5 l-2.75 2.75 z M262 85.5 h5.5 l-2.75 2.75 z" fill="#555"/><path d="M288 81.6 l2.6 -2.6 l2.6 2.6 z" fill="#3c78b4"/><path d="M311.6 79 h5.3 l-2.65 2.6 z" fill="#3c78b4"/><path d="M178.6 116 l2.6 2.4 l2.6 -2.4" fill="none" stroke="#555" stroke-width="1"/><path d="M224.5 116 l2.6 2.4 l2.6 -2.4" fill="none" stroke="#555" stroke-width="1"/><path d="M270.7 116 l2.6 2.4 l2.6 -2.4" fill="none" stroke="#555" stroke-width="1"/><path d="M309.5 116 l2.6 2.4 l2.6 -2.4" fill="none" stroke="#555" stroke-width="1"/><rect x="202.5" y="110.5" width="12" height="12" fill="#fff" stroke="#555" stroke-width="1"/><path d="M208.5 112v9M204 116.5h9" stroke="#888" stroke-width="1" stroke-dasharray="1 1"/><path d="M249.5 116 l5.5 -5.5 l5.5 5.5 l-5.5 5.5 z" fill="#fff" stroke="#444" stroke-width="1"/><path d="M253.5 112 v-3.5 q0 -1.5 1.5 -1.5 q1.5 0 1.5 1.5 v4" fill="none" stroke="#444" stroke-width="0.9"/><path d="M260 113 q2.5 -1.5 3.2 1.5 q0.3 2 -1.2 4.5 q-1.5 -2 -2 -6z" fill="#3c78b4"/><path d="M340 78.5 H354" stroke="#555" stroke-width="1"/><path d="M340 81.5 H354" stroke="#555" stroke-width="1"/><path d="M340 84.5 H354" stroke="#555" stroke-width="1"/><path d="M364 82.5 H378" stroke="#555" stroke-width="1"/><path d="M364 86.5 H378" stroke="#555" stroke-width="1"/><path d="M364 89.5 H378" stroke="#555" stroke-width="1"/><path d="M388 87.5 H402" stroke="#444" stroke-width="1"/><path d="M388 90.5 H402" stroke="#444" stroke-width="1"/><path d="M388 93.5 H402" stroke="#444" stroke-width="1"/><g stroke="#555" stroke-width="1"><path d="M340 112.5H354M340 115.5H350M340 118.5H354M340 121.5H350"/><path d="M364 112.5H378M366 115.5H376M364 118.5H378M366 121.5H376"/><path d="M388 112.5H402M392 115.5H402M388 118.5H402M392 121.5H402"/></g><text x="418" y="88" font-size="9" fill="#444" transform="rotate(-40 424 86)" font-family="Liberation Sans">ab</text><path d="M424 92 l10 -10 M431 82 h3 v3" fill="none" stroke="#444" stroke-width="1"/><path d="M439.6 85 l2.75 2.6 l2.75 -2.6" fill="none" stroke="#555" stroke-width="1"/><g stroke="#555" stroke-width="1"><path d="M418 109.5H434M426 113.5H434M426 117.5H434M418 122.5H434"/><path d="M442 109.5H458M450 113.5H458M450 117.5H458M442 122.5H458"/></g><path d="M418.5 115.5 h6.5 M418.5 115.5 l3 -3 M418.5 115.5 l3 3" fill="none" stroke="#3c78b4" stroke-width="1.5"/><path d="M442 115.5 h6.5 M448.5 115.5 l-3 -3 M448.5 115.5 l-3 3" fill="none" stroke="#3c78b4" stroke-width="1.5"/><text x="474" y="86" font-size="9.5" fill="#444" font-family="Liberation Sans">ab</text><text x="474" y="94" font-size="9.5" fill="#444" font-family="Liberation Sans">c</text><path d="M484 89 v3 h-3 l1.5 -1.5" fill="none" stroke="#3c78b4" stroke-width="1"/><rect x="473.5" y="109.5" width="14" height="14" fill="#fff" stroke="#555" stroke-width="1"/><path d="M473.5 113.5h14M473.5 119.5h14" stroke="#555"/><path d="M476 116.5 h9 M476 116.5 l2 -2 M476 116.5 l2 2 M485 116.5 l-2 -2 M485 116.5 l-2 2" fill="none" stroke="#3c78b4" stroke-width="1"/><path d="M605.5 116 l2.5 2.4 l2.5 -2.4" fill="none" stroke="#555" stroke-width="1"/><path d="M763 85.2 h5.5 l-2.75 2.8 z" fill="#555"/><rect x="636" y="109" width="15" height="8" fill="#fff" stroke="#3c78b4" stroke-width="1.8"/><circle cx="643.5" cy="113" r="1.6" fill="#3c78b4"/><g fill="#e8b86a"><ellipse cx="648" cy="118" rx="4" ry="1.6"/><ellipse cx="648" cy="121" rx="4" ry="1.6"/><ellipse cx="643" cy="123.5" rx="4" ry="1.6"/></g><path d="M659 116 l3 2.5 l3 -2.5" fill="none" stroke="#555" stroke-width="1"/><path d="M730 113.5 h6 M730 113.5 l2.5 -2.5 M730 113.5 l2.5 2.5" fill="none" stroke="#3c78b4" stroke-width="1.3"/><path d="M754 121 h6 M760 121 l-2.5 -2.5 M760 121 l-2.5 2.5" fill="none" stroke="#3c78b4" stroke-width="1.3"/><rect x="814.5" y="72.5" width="27.5" height="24" fill="#fff" stroke="#888" stroke-width="1"/><g fill="#e05a3a"><rect x="822" y="73" width="6" height="5.5"/><rect x="822" y="85" width="9" height="5.5"/></g><g fill="#3c78b4"><rect x="822" y="79" width="11" height="5.5"/><rect x="822" y="91" width="4" height="5.5"/></g><path d="M814.5 78.5h27.5M814.5 84.5h27.5M814.5 90.5h27.5M822 72.5v24M835.5 72.5v24" stroke="#aaa" stroke-width="1"/><rect x="828.5" y="89.5" width="15" height="12" fill="#fff" stroke="#555" stroke-width="1"/><text x="831.5" y="99.5" font-size="12" fill="#444" font-family="Liberation Sans">≠</text><path d="M892.5 75.5 h24 v20 h-24 z" fill="#fff" stroke="#999" stroke-width="1"/><rect x="898" y="81" width="18" height="14" fill="#c5d9ee"/><path d="M892.5 80.5h24M892.5 85.5h24M892.5 90.5h24M898.5 75.5v20M904.5 75.5v20M910.5 75.5v20" stroke="#999" stroke-width="1"/><path d="M907 97 l12 -12 l2.5 2.5 l-12 12 z" fill="#888"/><path d="M902 101.5 q0 -6 5 -6 l3 3 q-2 4 -8 3z" fill="#3c78b4"/><path d="M957.5 72.5 h26 v22 h-26 z" fill="#fff" stroke="#999" stroke-width="1"/><rect x="962" y="78" width="16" height="12" fill="#c5d9ee"/><path d="M957.5 77.5h26M957.5 90.5h26M962.5 72.5v22M978.5 72.5v22" stroke="#999" stroke-width="1"/><path d="M972 96 l12 -12 l2.5 2.5 l-12 12 z" fill="#888"/><path d="M966 100.5 q0 -6 5 -6 l3 3 q-2 4 -8 3z" fill="#3c78b4"/><path d="M858 127.5 l2.3 2.2 l2.3 -2.2" fill="none" stroke="#555" stroke-width="1"/><path d="M934 127.5 l2.3 2.2 l2.3 -2.2" fill="none" stroke="#555" stroke-width="1"/><path d="M982.6 127.5 l2.3 2.2 l2.3 -2.2" fill="none" stroke="#555" stroke-width="1"/><path d="M1085.2 77 l2.6 2.5 l2.6 -2.5" fill="none" stroke="#555" stroke-width="1"/><path d="M1089.6 100 l2.6 2.5 l2.6 -2.5" fill="none" stroke="#555" stroke-width="1"/><path d="M1084.4 123 l2.6 2.5 l2.6 -2.5" fill="none" stroke="#555" stroke-width="1"/><g fill="none" stroke="#666" stroke-width="1"><path d="M1016.5 70.5h8v3h-8z"/><path d="M1016.5 80.5h8v5h-8zM1016.5 83h8M1020.5 80.5v5"/><path d="M1016.5 93.5h8v3h-8z"/><path d="M1016.5 103.5h8v5h-8zM1016.5 106h8M1020.5 103.5v5"/></g><path d="M1024.5 75.5h7v3.5h-7z" fill="#c5dcf0" stroke="#666" stroke-width="1"/><path d="M1028 75.5v3.5" stroke="#666" stroke-width="1"/><path d="M1016.5 77.3h6 M1016.5 77.3l2.8 -2.6 M1016.5 77.3l2.8 2.6" fill="none" stroke="#3c78b4" stroke-width="1.6"/><path d="M1019.5 98.5h5v3h-5z" fill="#c5dcf0" stroke="#666" stroke-width="1"/><path d="M1025 97.5 l6 6 M1031 97.5 l-6 6" stroke="#e05a3a" stroke-width="1.6"/><path d="M1016.5 119.5h14v11h-14zM1016.5 123h14M1016.5 127h14M1021 119.5v11M1026 119.5v11" fill="none" stroke="#666" stroke-width="1"/><rect x="1021" y="123" width="5" height="4" fill="#3c78b4"/><path d="M1016.5 132.5h14" stroke="#888" stroke-width="1"/><path d="M1016.5 116.5h13 M1016.5 114.8v3.4 M1029.5 114.8v3.4" stroke="#3c78b4" stroke-width="1"/><path d="M1121 72 h13 v2.5 h-9.5 l5.5 4.6 l-5.5 4.6 h9.5 v2.5 h-13 v-2 l6 -5.1 l-6 -5.1 z" fill="#444"/><rect x="1121.5" y="93.5" width="13" height="15" fill="#fff" stroke="#666" stroke-width="1"/><rect x="1121.5" y="93.5" width="13" height="3" fill="#666"/><path d="M1128 98 v8 M1124.5 103 l3.5 3.5 l3.5 -3.5" fill="none" stroke="#3c78b4" stroke-width="1.6"/><path d="M1121.5 125 l7 -7 l4 4 l-7 7 z" fill="#ec7a8c"/><path d="M1121.5 125 l2.5 -2.5 l4 4 l-2.5 2.5 z" fill="#f5aab5"/><path d="M1143.3 76.5 l2.6 2.5 l2.6 -2.5" fill="none" stroke="#555" stroke-width="1"/><path d="M1143.3 100 l2.6 2.5 l2.6 -2.5" fill="none" stroke="#555" stroke-width="1"/><path d="M1143.3 123 l2.6 2.5 l2.6 -2.5" fill="none" stroke="#555" stroke-width="1"/><text x="1167.5" y="84.5" font-size="16" font-weight="bold" fill="#3c78b4" font-family="Liberation Sans" textLength="11" lengthAdjust="spacingAndGlyphs">A</text><text x="1168.5" y="98.4" font-size="16" font-weight="bold" fill="#9b59c8" font-family="Liberation Sans" textLength="9.5" lengthAdjust="spacingAndGlyphs">Z</text><path d="M1180 80 h16.7 l-6.5 6.5 v8 h-3.7 v-8 z" fill="#808080"/><path d="M1188 87 v6.5" stroke="#eee" stroke-width="1"/><circle cx="1252" cy="82" r="8.6" fill="none" stroke="#3c78b4" stroke-width="2.5"/><path d="M1245.5 88.5 l-9 9" stroke="#3c78b4" stroke-width="3.5" stroke-linecap="round"/><path d="M1197 127.8 l2.3 2.2 l2.3 -2.2" fill="none" stroke="#555" stroke-width="1"/><path d="M1278 127.8 l2.3 2.2 l2.3 -2.2" fill="none" stroke="#555" stroke-width="1"/><circle cx="20.25" cy="175.25" r="11" fill="#3f7ab8"/><circle cx="20.25" cy="169" r="1.8" fill="#fff"/><rect x="18.6" y="172" width="3.3" height="10" fill="#fff"/><path d="M1340.5 170.5 l9 8.5 M1349.5 170.5 l-9 8.5" stroke="#444" stroke-width="1.8"/><path d="M92.7 211 h7.6 l-3.8 3.8 z" fill="#666"/><g fill="#999"><rect x="121" y="208.5" width="2" height="2"/><rect x="121" y="212.5" width="2" height="2"/><rect x="121" y="216.5" width="2" height="2"/></g><path d="M150.5 209.5 l11 9.5 M161.5 209.5 l-11 9.5" stroke="#a6a6a6" stroke-width="1.5"/><path d="M185.5 214 l4.5 4.5 l9 -9" fill="none" stroke="#a6a6a6" stroke-width="2"/><path d="M1340 222 l5 -5 M1340 222 h3 M1340 222 v-3" fill="none" stroke="#666" stroke-width="1"/><path d="M1347 215 l2 -2" stroke="#999" stroke-width="1"/><path d="M10.5 253 L22 253 L22 241.5 Z" fill="#b7b7b7"/><path d="M1345 248.5 h9 l-4.5 -4.5 z" fill="#222"/><path d="M1345 668 h9 l-4.5 4.5 z" fill="#222"/><path d="M31 687.5 v7.5 l-4 -3.75 z M55.5 687.5 v7.5 l4 -3.75 z" fill="#bdbdbd"/><circle cx="641" cy="692.4" r="7" fill="none" stroke="#888" stroke-width="1.2"/><path d="M637 692.4 h8 M641 688.4 v8" stroke="#888" stroke-width="1.4"/><g fill="#aaa"><rect x="816" y="686" width="1.5" height="1.5"/><rect x="816" y="690.5" width="1.5" height="1.5"/><rect x="816" y="695" width="1.5" height="1.5"/></g><path d="M843 688.5 v8 l-4 -4 z" fill="#222"/><path d="M1330 688.5 v8 l4 -4 z" fill="#222"/><g fill="none" stroke="#444" stroke-width="1.2"><path d="M56 712 a6 6 0 1 0 6 9"/><path d="M58 710.5 v5"/><path d="M60 717 l6 7 M66 717 l-6 7" stroke-width="1.6"/></g><g fill="none" stroke="#666" stroke-width="1"><rect x="1072.5" y="710.5" width="13" height="12"/><path d="M1072.5 714.5h13M1072.5 718.5h13M1076.5 710.5v12M1081.5 710.5v12"/><rect x="1113.5" y="710.5" width="13" height="12"/><rect x="1116.5" y="713.5" width="7" height="6"/><path d="M1118 715.5h4M1118 717.5h4"/><path d="M1153.5 710.5h13v12h-13z M1160 710.5v6h-6.5"/></g><path d="M1186 716.5h7M1198.5 716.5h100M1303 716.5h9M1307.5 712v9" stroke="#666" stroke-width="1"/><rect x="1247" y="711" width="5" height="12" fill="#555"/><g fill="#fff"><path d="M15.5 741.5 l7 -1 v7 h-7z M23.5 740.4 l9 -1.3 v8.4 h-9z M15.5 748.5 h7 v7 l-7 -1z M23.5 748.5 h9 v8.4 l-9 -1.3z"/></g><circle cx="74" cy="746.5" r="5.5" fill="none" stroke="#fff" stroke-width="1.3"/><path d="M70 750.5 l-6 6" stroke="#fff" stroke-width="1.5"/><defs><linearGradient id="edg" x1="0" y1="0" x2="0.3" y2="1"><stop offset="0" stop-color="#35c1f1"/><stop offset="1" stop-color="#1558b0"/></linearGradient><linearGradient id="edg2" x1="0" y1="0" x2="1" y2="1"><stop offset="0" stop-color="#2fb6e8"/><stop offset="1" stop-color="#62d55a"/></linearGradient><linearGradient id="ffx" x1="0" y1="0" x2="0" y2="1"><stop offset="0" stop-color="#ffd43b"/><stop offset="0.5" stop-color="#ff7a2f"/><stop offset="1" stop-color="#f2307a"/></linearGradient></defs><circle cx="123" cy="748" r="12.1" fill="url(#edg)"/><path d="M112 746 A12 12 0 0 1 135 746.5 q0.5 6 -6 6.5 q-5 0 -5.5 -3.5 q3.5 -0.5 3 -4 q-1.5 -5 -8 -5 q-5 0 -8.5 4z" fill="url(#edg2)"/><path d="M112 748 q1 -6 7 -6.5 q-6 4 -3 10.5 q4 8 15 5.5 a12 12 0 0 1 -19 -9.5z" fill="#0f4fa0"/><ellipse cx="126.5" cy="749.5" rx="3.8" ry="2.6" fill="#101010"/><path d="M172 748 L161.61 742.00 A12 12 0 0 1 182.39 742.00 Z" fill="#ea4335"/><path d="M172 748 L182.39 742.00 A12 12 0 0 1 172.00 760.00 Z" fill="#fbbc04"/><path d="M172 748 L172.00 760.00 A12 12 0 0 1 161.61 742.00 Z" fill="#34a853"/><circle cx="172" cy="748" r="5.8" fill="#fff"/><circle cx="172" cy="748" r="4.5" fill="#4285f4"/><rect x="214.8" y="737" width="18.2" height="21" rx="1.2" fill="#185abd"/><rect x="214.8" y="737" width="18.2" height="5.5" fill="#41a5ee"/><rect x="214.8" y="742.5" width="18.2" height="5" fill="#2b7cd3"/><rect x="214.8" y="752.5" width="18.2" height="5.5" fill="#103f91"/><rect x="209" y="742" width="12.5" height="12.3" rx="1" fill="#185abd"/><text x="210.2" y="752" font-size="9.5" font-weight="bold" fill="#fff" font-family="Liberation Sans">W</text><path d="M259 740 h7 l2 2 h12.2 v14.5 h-21.2z" fill="#e8b836"/><rect x="259" y="743" width="21.2" height="13.5" fill="#f8d775"/><path d="M262 749.5 h14.7 v7 h-4 v-3.5 h-6.7 v3.5 h-4z" fill="#3f9be8"/><rect x="313.2" y="737" width="18" height="21" rx="1.2" fill="#185c37"/><rect x="313.2" y="737" width="18" height="5.3" fill="#33c481"/><rect x="313.2" y="742.3" width="18" height="5.3" fill="#21a366"/><rect x="313.2" y="747.6" width="18" height="5.3" fill="#107c41"/><rect x="307" y="742" width="12.4" height="12.3" rx="1" fill="#107c41"/><text x="309.6" y="752" font-size="9.5" font-weight="bold" fill="#fff" font-family="Liberation Sans">X</text><circle cx="368" cy="749" r="10.8" fill="url(#ffx)"/><path d="M358 745 q1 -6 5 -8 q-1 3 1 4 q3 -4 8 -5 q-2 3 1 4 q6 2 7 9 q-3 -5 -8 -5z" fill="#ffbd2e"/><circle cx="368.5" cy="749.5" r="5.8" fill="#7b3ff2"/><path d="M362.5 748 q3 -5 9 -3 q-5 -0.5 -6 4z" fill="#ff8a3d"/><path d="M405 750 q0 -9 11 -10 q11 -1 12 6 q1 5 -5 5 q-3 0 -2 3 q1 4 -5 5 q-11 1 -11 -9z" fill="#cfe3f3" stroke="#9ec3e0" stroke-width="0.8"/><circle cx="410" cy="747.5" r="1.8" fill="#e84a3a"/><circle cx="414" cy="743.5" r="1.8" fill="#5cc45a"/><circle cx="419" cy="742.5" r="1.8" fill="#f6b73c"/><circle cx="414.5" cy="750" r="1.5" fill="#101010"/><path d="M418.5 759.5 l8 -18" stroke="#e08a2a" stroke-width="2"/><path d="M425 742 l2.5 -5.5 l2 1 l-2 5.5z" fill="#f0c080"/><path d="M466 748 L455.61 742.00 A12 12 0 0 1 476.39 742.00 Z" fill="#ea4335"/><path d="M466 748 L476.39 742.00 A12 12 0 0 1 466.00 760.00 Z" fill="#fbbc04"/><path d="M466 748 L466.00 760.00 A12 12 0 0 1 455.61 742.00 Z" fill="#34a853"/><circle cx="466" cy="748" r="5.8" fill="#fff"/><circle cx="466" cy="748" r="4.5" fill="#4285f4"/><circle cx="471.5" cy="755" r="6.2" fill="#8a8a8a"/><circle cx="471.5" cy="755" r="4.5" fill="#b8b8b8"/><circle cx="469.5" cy="754" r="1" fill="#333"/><circle cx="473.5" cy="754" r="1" fill="#333"/><path d="M1093 751.5 l6.2 -7 l6.2 7" fill="none" stroke="#fff" stroke-width="1.2"/><rect x="1114.5" y="745" width="17" height="7" fill="#ccc"/><rect x="1118" y="740.5" width="10" height="5" fill="#fff"/><rect x="1118" y="750" width="10" height="6" fill="#fff"/><rect x="1120" y="751.5" width="3" height="2" fill="#3b7de0"/><g fill="none" stroke="#fff" stroke-width="1.1"><rect x="1142.5" y="744.5" width="7" height="7"/><path d="M1149.5 746.5 l3.5 -2 v7 l-3.5 -2"/><path d="M1143 742 a5 5 0 0 1 6 0 M1143 754 a5 5 0 0 0 6 0"/></g><g fill="none" stroke="#fff" stroke-width="1.1"><rect x="1166.5" y="743.5" width="12" height="8"/><rect x="1163.5" y="740.5" width="5" height="6"/><path d="M1172.5 751.5v3M1168 755.5h9M1166 746.5v9"/></g><g fill="none" stroke="#fff" stroke-width="1.1"><path d="M1187 745.5h3l4 -4v14l-4 -4h-3z"/><path d="M1196.5 745 q2 3 0 6M1199 743 q3.5 5 0 10M1201.5 741 q5 7 0 14"/></g><path d="M1319.5 740.5h16v12h-6l-2.5 3l-2.5 -3h-5z" fill="none" stroke="#fff" stroke-width="1.1"/></svg>
</body></html>
